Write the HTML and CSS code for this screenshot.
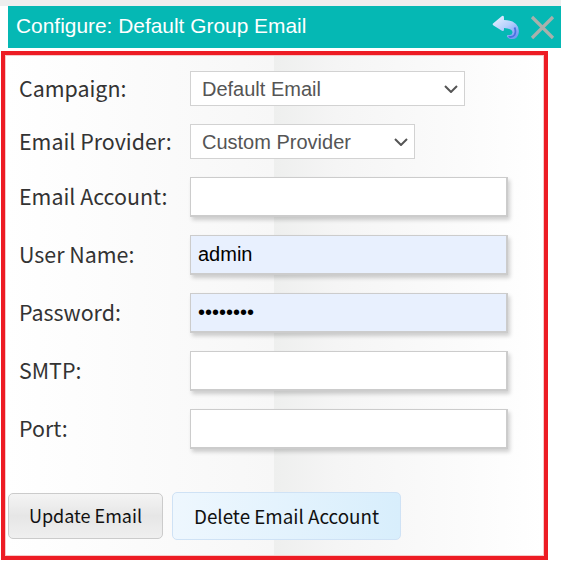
FILE: index.html
```html
<!DOCTYPE html>
<html lang="en">
<head>
<meta charset="utf-8">
<title>Configure: Default Group Email</title>
<link rel="stylesheet" href="styles.css">
</head>
<body>
<header class="titlebar">
  <h1 class="title">Configure: Default Group Email</h1>
  <div class="tools">
    <svg class="back" width="28" height="25" viewBox="0 0 28 25" aria-label="Back">
      <defs>
        <linearGradient id="bk" x1="0" y1="0" x2="0.8" y2="1">
          <stop offset="0" stop-color="#eef5ff"/>
          <stop offset="0.55" stop-color="#b4cffd"/>
          <stop offset="1" stop-color="#6f97f2"/>
        </linearGradient>
      </defs>
      <path d="M1 8.5 L10 1 Q12 0 12 3 L12 5 Q20 5 24 9 Q28 13 26.5 19 Q25 24 21 24 Q16.5 24.5 15 21.5 Q14.500 19.500 17 20 Q20 20.500 20.500 17.500 Q20.500 13.500 12 13 L12 14.500 Q12 17 9.500 15.500 L1.500 10.500 Q0 9.500 1 8.500 Z" fill="url(#bk)"/>
      <path d="M16.500 21.500 Q20 23 22.500 20 Q24.500 16.500 22.500 12.500" fill="none" stroke="#4a70e0" stroke-width="1.800"/>
    </svg>
    <svg class="close" width="25" height="25" viewBox="0 0 25 25" aria-label="Close">
      <path d="M2 2 L23 23 M23 2 L2 23" stroke="#a9b0ac" stroke-width="3.2" fill="none"/>
    </svg>
  </div>
</header>
<main class="panel">
  <form class="form">
    <div class="row row-select">
      <label class="label">Campaign:</label>
      <select class="select select-wide"><option>Default Email</option></select>
    </div>
    <div class="row row-select">
      <label class="label">Email Provider:</label>
      <select class="select select-narrow"><option>Custom Provider</option></select>
    </div>
    <div class="row">
      <label class="label">Email Account:</label>
      <input class="input" type="text">
    </div>
    <div class="row">
      <label class="label">User Name:</label>
      <input class="input filled" type="text" value="admin">
    </div>
    <div class="row">
      <label class="label">Password:</label>
      <input class="input filled" type="password" value="password">
    </div>
    <div class="row">
      <label class="label">SMTP:</label>
      <input class="input" type="text">
    </div>
    <div class="row">
      <label class="label">Port:</label>
      <input class="input" type="text">
    </div>
    <div class="actions">
      <button class="btn btn-update" type="button">Update Email</button>
      <button class="btn btn-delete" type="button">Delete Email Account</button>
    </div>
  </form>
</main>
</body>
</html>
```
FILE: styles.css
```css
* { box-sizing: border-box; }
html, body { height: 100%; }
body {
  margin: 0;
  overflow: hidden;
  background: #fff;
  font-family: "Noto Sans CJK SC", "Noto Sans", sans-serif;
}
body::before {
  content: "";
  display: block;
  height: 6px;
  background: #eeeeee;
}
.titlebar {
  margin-left: 8px;
  height: 42px;
  background: #05b8b4;
  display: flex;
  align-items: center;
  justify-content: space-between;
}
.title {
  margin: 0 0 2px 8px;
  font: 400 20.9px "Liberation Sans", Arial, sans-serif;
  color: #fff;
}
.tools {
  display: flex;
  align-items: center;
  gap: 10px;
  margin-right: 6px;
}
.panel {
  margin: 3px 13px 0 1px;
  height: 509px;
  border: 4px solid #ed1c24;
  outline: 1px solid #f6c9c9;
  outline-offset: -5px;
  background: linear-gradient(90deg, #fff 0, #f7f7f7 269px, #eeefee 269px, #f5f5f5 330px, #fff 100%);
  padding: 16px 3px 0 3px;
}
.form { display: flex; flex-direction: column; }
.row {
  display: flex;
  align-items: center;
  height: 40px;
  margin-bottom: 18px;
  padding-left: 11px;
}
.row-select { height: 35px; margin-bottom: 18px; }
.label {
  width: 171px;
  font-size: 21.4px;
  line-height: 30px;
  margin-top: -3px;
  color: #333;
  flex: none;
}
.row-select .label { margin-top: -1px; }
.select {
  height: 35px;
  padding: 0 30px 0 11px;
  appearance: none;
  background-color: #fff;
  background-image: url("data:image/svg+xml,%3Csvg xmlns='http://www.w3.org/2000/svg' width='14' height='8' viewBox='0 0 14 8'%3E%3Cpath d='M1 1 L7 7 L13 1' fill='none' stroke='%23555' stroke-width='2'/%3E%3C/svg%3E");
  background-repeat: no-repeat;
  background-position: right 6px center;
  border: 1px solid #d2d2d2;
  border-radius: 0;
  color: #555;
  font: 20px "Liberation Sans", Arial, sans-serif;
}
.select-wide { width: 275px; }
.select-narrow { width: 225px; }
.input {
  width: 318px;
  height: 40px;
  padding: 0 7px;
  background: #fff;
  border: 2px solid #cccccc;
  border-width: 1px 2px 2px 1px;
  box-shadow: 2px 3px 4px rgba(0, 0, 0, .18);
  color: #000;
  font: 20px "Liberation Sans", Arial, sans-serif;
  outline: none;
}
.filled { background: #e8f0fe; }
.actions {
  display: flex;
  align-items: center;
  gap: 9px;
  margin-top: 25px;
}
.btn {
  font-family: inherit;
  color: #111;
  border-radius: 5px;
  padding: 0 0 2px;
}
.btn-update {
  width: 155px;
  height: 46px;
  font-size: 18px;
  background: linear-gradient(180deg, #f4f4f4 0, #e6e6e6 50%, #efefef 100%);
  border: 1px solid #cbcbcb;
}
.btn-delete {
  width: 229px;
  height: 48px;
  font-size: 18.8px;
  background: linear-gradient(90deg, #eef7fe, #d8eefc);
  border: 1px solid #cfe2f5;
}
```
